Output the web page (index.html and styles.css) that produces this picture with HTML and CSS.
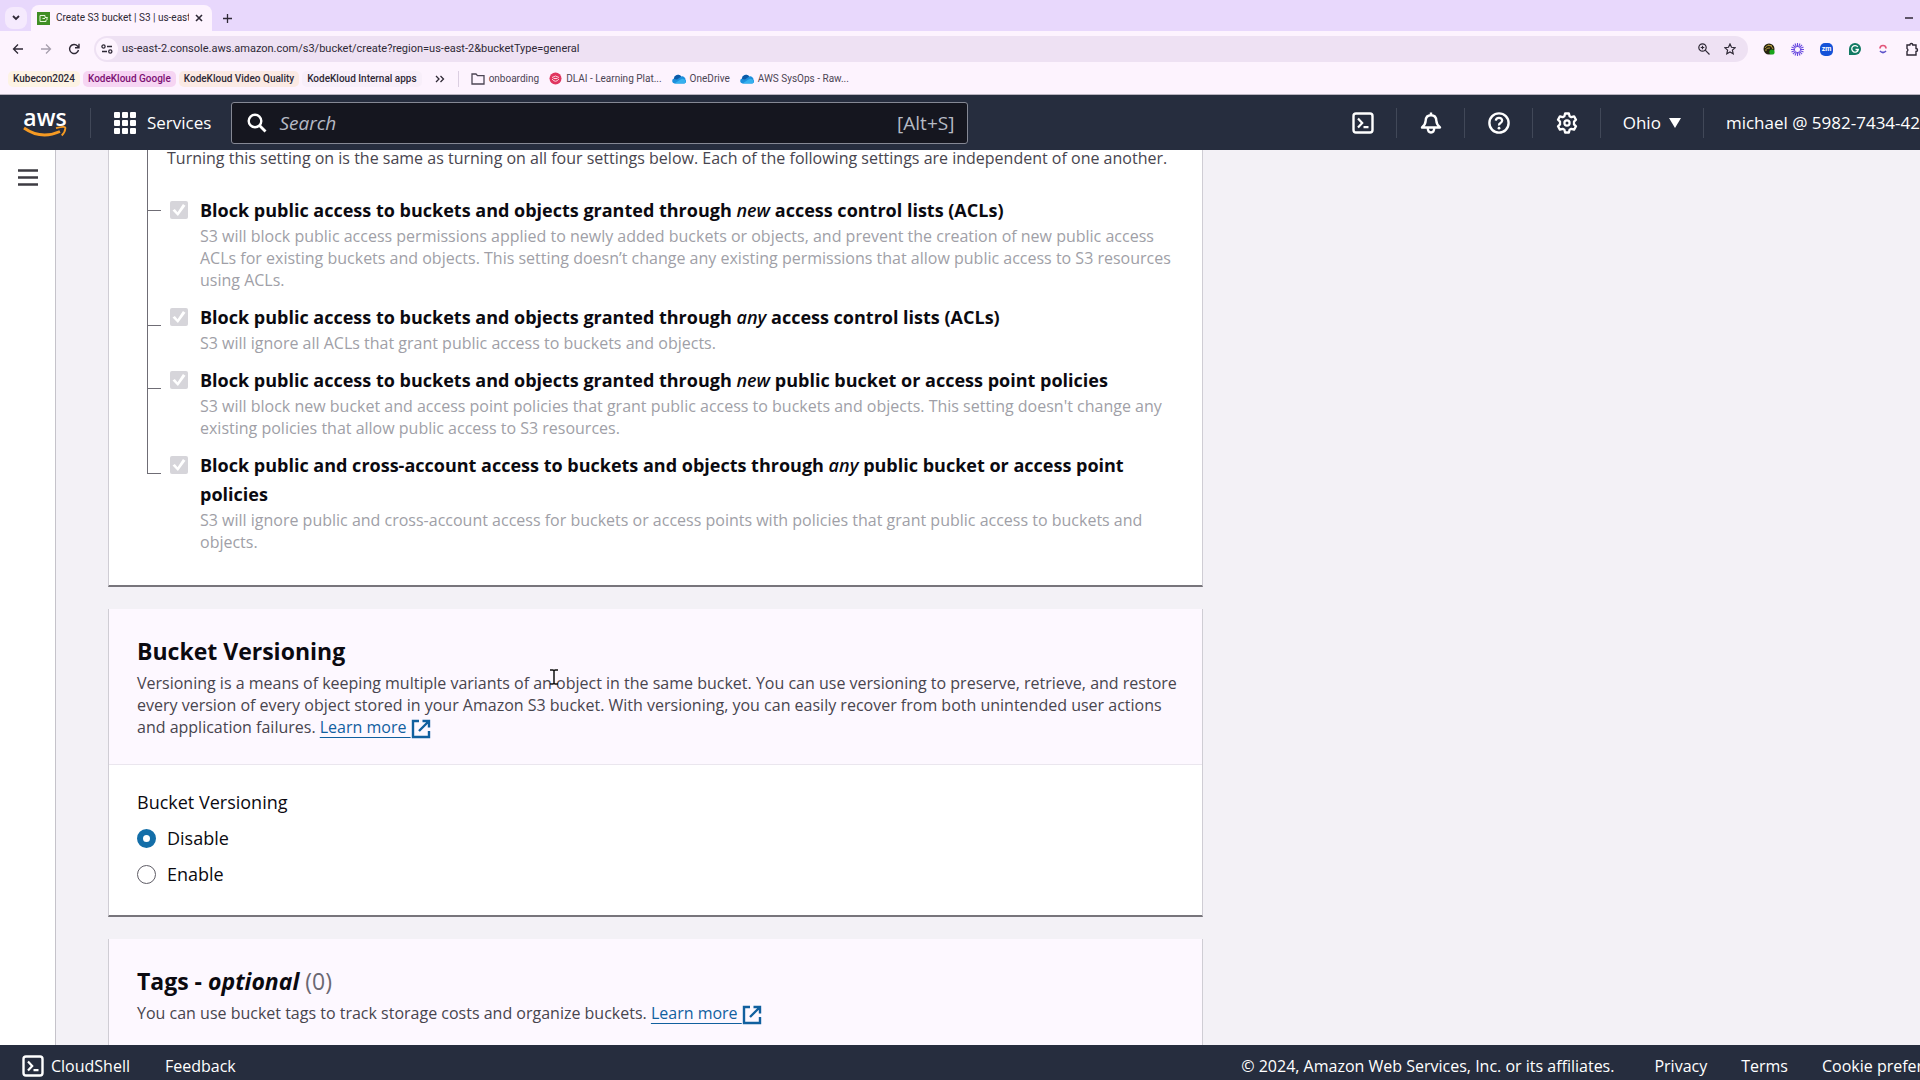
FILE: index.html
```html
<!DOCTYPE html>
<html lang="en">
<head>
<meta charset="utf-8">
<title>Create S3 bucket | S3 | us-east-2</title>
<link rel="stylesheet" href="styles.css">
</head>
<body>
<svg class="defs" aria-hidden="true">
  <symbol id="terminal" viewBox="0 0 22 22"><rect x="1.5" y="1.5" width="19" height="19" rx="2.5" fill="none" stroke="currentColor" stroke-width="2.4"/><path d="M6 6.5l4.2 4.5L6 15.500M11.500 15.200h5" fill="none" stroke="currentColor" stroke-width="2.200"/></symbol>
  <symbol id="external" viewBox="0 0 20 20"><path d="M8 2H2v16h16v-6M11.500 2H18v6.500M18 2L8 12" fill="none" stroke="currentColor" stroke-width="2.400"/></symbol>
  <symbol id="cloud" viewBox="0 0 14 10"><path d="M2.500 9.500A2.500 2.500 0 0 1 2 4.600 4 4 0 0 1 9.300 2.500 3.300 3.300 0 0 1 13.500 6 2 2 0 0 1 12 9.500z" fill="#1b8fdc"/><path d="M2 4.600A4 4 0 0 1 9.300 2.500L5 5.500 2 5z" fill="#0b5aa8"/><path d="M2.500 9.500L8.500 5.500Q11 3.500 13.500 6.500 14 9.500 12 9.500z" fill="#35b1ef"/></symbol>
</svg>

<header class="browser">
  <div class="tabs">
    <button class="tab-search" aria-label="Search tabs"><svg width="8" height="6" viewBox="0 0 8 6"><path d="M1 1l3 3 3-3" fill="none" stroke="currentColor" stroke-width="1.800"/></svg></button>
    <div class="tab">
      <svg width="13" height="13" viewBox="0 0 13 13"><rect width="13" height="13" fill="#3f8e24"/><path d="M3 3.500h5M3 3.500v6h6V8M8 3.500v2h2.500M5.500 6.500h2.500M10 5v3" fill="none" stroke="#e4f5d8"/></svg>
      <span class="tab-title">Create S3 bucket | S3 | us-east</span>
      <button class="plain" aria-label="Close tab"><svg width="8" height="8" viewBox="0 0 8 8"><path d="M1 1l6 6M7 1L1 7" stroke="currentColor" stroke-width="1.600"/></svg></button>
    </div>
    <button class="plain new-tab" aria-label="New tab"><svg width="9" height="9" viewBox="0 0 9 9"><path d="M4.500 0v9M0 4.500h9" stroke="currentColor" stroke-width="1.300"/></svg></button>
    <button class="plain minimize" aria-label="Minimize"><svg width="8" height="2" viewBox="0 0 8 2"><path d="M0 1h8" stroke="currentColor" stroke-width="1.500"/></svg></button>
  </div>
  <div class="toolbar">
    <nav class="history">
      <button class="plain" aria-label="Back"><svg width="12" height="12" viewBox="0 0 12 12"><path d="M11 6H1.500M6 1.500L1.500 6 6 10.500" fill="none" stroke="currentColor" stroke-width="1.300"/></svg></button>
      <button class="plain faded" aria-label="Forward"><svg width="12" height="12" viewBox="0 0 12 12"><path d="M1 6h9.500M6 1.500L10.500 6 6 10.500" fill="none" stroke="currentColor" stroke-width="1.300"/></svg></button>
      <button class="plain" aria-label="Reload"><svg width="12" height="12" viewBox="0 0 12 12"><path d="M10.500 7A4.500 4.500 0 1 1 9.500 3L11 4.500M11 .8v4H7" fill="none" stroke="currentColor" stroke-width="1.400"/></svg></button>
    </nav>
    <div class="omnibox">
      <button class="site-info" aria-label="Site information"><svg width="12" height="10" viewBox="0 0 12 10"><g fill="none" stroke="currentColor" stroke-width="1.300"><circle cx="2.500" cy="2.500" r="1.600"/><path d="M6 2.500h5M1 7.500h5"/><circle cx="9.300" cy="7.500" r="1.600"/></g></svg></button>
      <input class="url" aria-label="Address" value="us-east-2.console.aws.amazon.com/s3/bucket/create?region=us-east-2&amp;bucketType=general">
      <button class="plain" aria-label="Zoom"><svg width="12" height="12" viewBox="0 0 12 12"><g fill="none" stroke="currentColor" stroke-width="1.200"><circle cx="4.500" cy="4.500" r="3.700"/><path d="M7.200 7.200l4.300 4.300M2.700 4.500h3.600M4.500 2.700v3.600"/></g></svg></button>
      <button class="plain" aria-label="Bookmark"><svg width="12" height="12" viewBox="0 0 12 12"><path d="M6 1l1.500 3.300 3.600.4-2.700 2.400.8 3.600L6 8.900l-3.200 1.800.8-3.600L.9 4.700l3.600-.4z" fill="none" stroke="currentColor" stroke-width="1.200"/></svg></button>
    </div>
    <div class="extensions">
      <svg width="12" height="12" viewBox="0 0 12 12"><circle cx="6" cy="6" r="5.500" fill="#262411"/><path d="M2 5q2-4 7-2M3 8q-1-3 4-3M5 2q4 0 5 4" fill="none" stroke="#b69a3c"/><circle cx="9" cy="9" r="2.600" fill="#19a51a"/></svg>
      <svg width="13" height="13" viewBox="-6.500 -6.500 13 13"><path d="M0-2.500v-4M0 2.500v4M-2.500 0h-4M2.500 0h4M1.800-1.800l2.800-2.800M-1.800 1.800l-2.800 2.800M1.800 1.800l2.800 2.800M-1.800-1.800l-2.800-2.800M1-2.300L2.500-6M-1-2.300L-2.500-6M1 2.300L2.500 6M-1 2.300L-2.500 6M2.300 1L6 2.500M2.300-1L6-2.500M-2.300 1L-6 2.500M-2.300-1L-6-2.500" stroke="#6a4be0" stroke-width="1.100"/></svg>
      <span class="zm">zm</span>
      <svg width="12" height="12" viewBox="0 0 12 12"><path d="M6 0a6 6 0 1 1 0 12H0V6a6 6 0 0 1 6-6z" fill="#117a63"/><path d="M8.800 4A3.300 3.300 0 1 0 9.300 6.500H6.500" fill="none" stroke="#fff" stroke-width="1.300"/></svg>
      <svg width="12" height="12" viewBox="0 0 12 12"><path d="M3 5.500q0-3 3-3t3 3" fill="none" stroke="#e2557a" stroke-width="1.700"/><path d="M3 8q3 3 6 0" fill="none" stroke="#5b51c9" stroke-width="1.700"/></svg>
      <svg width="14" height="14" viewBox="0 0 14 14"><path d="M2 3h2.800a1.500 1.500 0 0 1 3 0H11v3.500a1.500 1.500 0 0 1 0 3V13H2V9.500q1.800-1.500 0-3z" fill="none" stroke="currentColor" stroke-width="1.400"/></svg>
    </div>
  </div>
  <nav class="bookmarks">
    <button class="chip cream">Kubecon2024</button>
    <button class="chip pink">KodeKloud Google</button>
    <button class="chip peach">KodeKloud Video Quality</button>
    <button class="chip grey">KodeKloud Internal apps</button>
    <button class="plain more" aria-label="More groups"><svg width="10" height="8" viewBox="0 0 10 8"><path d="M1 1l3 3-3 3M5.500 1l3 3-3 3" fill="none" stroke="currentColor" stroke-width="1.300"/></svg></button>
    <a class="bookmark first" href="#"><svg width="14" height="12" viewBox="0 0 14 12"><path d="M1 1h4l1.500 1.700H13V11H1z" fill="none" stroke="currentColor" stroke-width="1.300"/></svg>onboarding</a>
    <a class="bookmark" href="#"><svg width="13" height="13" viewBox="0 0 13 13"><circle cx="6.500" cy="6.500" r="6" fill="#e0355f"/><path d="M3 5.500q3.500-3 7 0M3 7q3.500 4.500 7 0M4.500 6.500h4" fill="none" stroke="#fbd3de"/></svg>DLAI - Learning Plat...</a>
    <a class="bookmark" href="#"><svg width="14" height="10"><use href="#cloud"/></svg>OneDrive</a>
    <a class="bookmark" href="#"><svg width="14" height="10"><use href="#cloud"/></svg>AWS SysOps - Raw...</a>
  </nav>
</header>

<header class="console-nav">
  <a class="logo" href="#" aria-label="AWS home">
    <span class="logo-text">aws</span>
    <svg width="44" height="12" viewBox="0 0 44 12"><path d="M1 2Q18 14 37 5.500" fill="none" stroke="#f59a23" stroke-width="2.800"/><path d="M33 2.200Q43-.5 42.300 2.500 42 6.500 38.700 9.500" fill="none" stroke="#f59a23" stroke-width="1.900"/></svg>
  </a>
  <button class="services"><svg width="22" height="22" viewBox="0 0 22 22" fill="#fff"><rect width="6" height="6" rx="1"/><rect x="8" width="6" height="6" rx="1"/><rect x="16" width="6" height="6" rx="1"/><rect y="8" width="6" height="6" rx="1"/><rect x="8" y="8" width="6" height="6" rx="1"/><rect x="16" y="8" width="6" height="6" rx="1"/><rect y="16" width="6" height="6" rx="1"/><rect x="8" y="16" width="6" height="6" rx="1"/><rect x="16" y="16" width="6" height="6" rx="1"/></svg>Services</button>
  <label class="search">
    <svg width="20" height="20" viewBox="0 0 20 20"><circle cx="8" cy="8" r="6.300" fill="none" stroke="#fff" stroke-width="2.400"/><path d="M12.500 12.500l6 6" stroke="#fff" stroke-width="2.800"/></svg>
    <input type="search" placeholder="Search" aria-label="Search">
    <span>[Alt+S]</span>
  </label>
  <div class="tools">
    <button class="tool" aria-label="CloudShell"><svg width="22" height="22"><use href="#terminal"/></svg></button>
    <button class="tool" aria-label="Notifications"><svg width="22" height="22" viewBox="0 0 22 22"><g fill="none" stroke="currentColor" stroke-width="2.400"><path d="M11 .5v3M2 15.500q3.500-3 3.700-7Q6 3.200 11 3.200t5.300 5.300q.2 4 3.700 7zM7.800 16q0 4.500 3.200 4.500t3.200-4.500" stroke-linejoin="round"/></g></svg></button>
    <button class="tool" aria-label="Help"><svg width="22" height="22" viewBox="0 0 22 22"><circle cx="11" cy="11" r="9.600" fill="none" stroke="currentColor" stroke-width="2.400"/><path d="M7.800 8.700Q8 5.800 11 5.800t3.200 2.800Q14.200 10 12.500 11T11 13.500" fill="none" stroke="currentColor" stroke-width="2.200"/><circle cx="11" cy="16.200" r="1.400" fill="currentColor"/></svg></button>
    <button class="tool" aria-label="Settings"><svg width="22" height="22" viewBox="0 0 22 22"><path d="M9.100 1.500h3.800l.7 2.700 1.800 1 2.700-.8 1.900 3.300-2 1.900v2.800l2 1.900-1.900 3.300-2.700-.8-1.800 1-.7 2.700H9.100l-.7-2.700-1.800-1-2.700.8L2 14.300l2-1.900V9.600L2 7.700l1.900-3.300 2.700.8 1.800-1z" fill="none" stroke="currentColor" stroke-width="2.300" stroke-linejoin="round"/><circle cx="11" cy="11" r="2.600" fill="none" stroke="currentColor" stroke-width="2.200"/></svg></button>
    <button class="region">Ohio<svg width="12" height="10" viewBox="0 0 12 10"><path d="M0 0h12L6 10z" fill="#fff"/></svg></button>
    <button class="account">michael @ 5982-7434-42</button>
  </div>
</header>

<div class="workspace">
  <aside class="side"><button class="plain" aria-label="Open navigation"><svg width="20" height="17" viewBox="0 0 20 17"><path d="M0 1.500h20M0 8.500h20M0 15.500h20" stroke="#3d3b42" stroke-width="2.600"/></svg></button></aside>
  <main class="content">
    <section class="card access">
      <div class="branch intro"><span class="rail"></span><p class="desc dark">Turning this setting on is the same as turning on all four settings below. Each of the following settings are independent of one another.</p></div>
      <div class="branch">
        <span class="rail"></span><input type="checkbox" id="acl-new" checked disabled>
        <div><label for="acl-new">Block public access to buckets and objects granted through <em>new</em> access control lists (ACLs)</label>
        <p class="desc">S3 will block public access permissions applied to newly added buckets or objects, and prevent the creation of new public access ACLs for existing buckets and objects. This setting doesn’t change any existing permissions that allow public access to S3 resources using ACLs.</p></div>
      </div>
      <div class="branch">
        <span class="rail"></span><input type="checkbox" id="acl-any" checked disabled>
        <div><label for="acl-any">Block public access to buckets and objects granted through <em>any</em> access control lists (ACLs)</label>
        <p class="desc">S3 will ignore all ACLs that grant public access to buckets and objects.</p></div>
      </div>
      <div class="branch">
        <span class="rail"></span><input type="checkbox" id="policy-new" checked disabled>
        <div><label for="policy-new">Block public access to buckets and objects granted through <em>new</em> public bucket or access point policies</label>
        <p class="desc">S3 will block new bucket and access point policies that grant public access to buckets and objects. This setting doesn't change any existing policies that allow public access to S3 resources.</p></div>
      </div>
      <div class="branch last">
        <span class="rail"></span><input type="checkbox" id="policy-any" checked disabled>
        <div><label for="policy-any">Block public and cross-account access to buckets and objects through <em>any</em> public bucket or access point policies</label>
        <p class="desc">S3 will ignore public and cross-account access for buckets or access points with policies that grant public access to buckets and objects.</p></div>
      </div>
    </section>

    <section class="card">
      <div class="card-head">
        <h2>Bucket Versioning</h2>
        <p class="desc dark">Versioning is a means of keeping multiple variants of an object in the same bucket. You can use versioning to preserve, retrieve, and restore every version of every object stored in your Amazon S3 bucket. With versioning, you can easily recover from both unintended user actions and application failures. <a class="learn" href="#">Learn more <svg width="20" height="20"><use href="#external"/></svg></a></p>
      </div>
      <fieldset class="options">
        <legend>Bucket Versioning</legend>
        <label><input type="radio" name="versioning" checked>Disable</label>
        <label><input type="radio" name="versioning">Enable</label>
      </fieldset>
    </section>

    <section class="card">
      <div class="card-head">
        <h2>Tags - <em>optional</em> <span class="count">(0)</span></h2>
        <p class="desc dark">You can use bucket tags to track storage costs and organize buckets. <a class="learn" href="#">Learn more <svg width="20" height="20"><use href="#external"/></svg></a></p>
      </div>
    </section>
  </main>
</div>

<footer class="footer">
  <button class="shell"><svg width="22" height="22"><use href="#terminal"/></svg>CloudShell</button>
  <a href="#">Feedback</a>
  <span class="copyright">© 2024, Amazon Web Services, Inc. or its affiliates.</span>
  <a href="#">Privacy</a>
  <a href="#">Terms</a>
  <a class="cookies" href="#">Cookie preferences</a>
</footer>
<svg class="cursor" width="10" height="16" viewBox="0 0 10 16" aria-hidden="true"><path d="M1 1h3l1 1 1-1h3M1 15h3l1-1 1 1h3M5 2v12" fill="none" stroke="#111" stroke-width="1.500"/></svg>
</body>
</html>
```
FILE: styles.css
```css
* { box-sizing: border-box; }

body {
  margin: 0;
  height: 100vh;
  display: flex;
  flex-direction: column;
  overflow: hidden;
  background: #f3f1f6;
  color: #0b0a10;
  font: 16px/22px "Open Sans", "Noto Sans", sans-serif;
}

button, input { font: inherit; color: inherit; }
button { border: 0; background: none; padding: 0; white-space: nowrap; }
a { color: inherit; text-decoration: none; white-space: nowrap; }
svg { flex: none; display: block; }
h2, p, fieldset, legend { margin: 0; padding: 0; border: 0; }
.defs { position: absolute; width: 0; height: 0; }
.plain { display: flex; flex: none; }

/* Browser chrome */
.browser {
  flex: none;
  background: #fdf3fe;
  border-bottom: 1px solid #b9b3bf;
  color: #2f2936;
  font: 11px/16px Roboto, "Noto Sans", sans-serif;
}
.tabs {
  display: flex;
  align-items: center;
  height: 31px;
  padding: 5px 7px 0 5px;
  background: #e8d8fc;
}
.tab-search {
  display: grid;
  place-items: center;
  width: 22px;
  height: 22px;
  margin-right: 4px;
  border-radius: 8px;
  background: #f5eafd;
}
.tab {
  display: flex;
  align-items: center;
  gap: 6px;
  width: 181px;
  height: 26px;
  padding: 0 9px 0 6px;
  border-radius: 8px 8px 0 0;
  background: #fdf3fe;
}
.tab-title {
  flex: 1;
  overflow: hidden;
  white-space: nowrap;
  font-size: 10px;
}
.new-tab { margin-left: 11px; }
.minimize { margin-left: auto; }

.toolbar {
  display: flex;
  align-items: center;
  height: 36px;
}
.history { display: flex; gap: 16px; padding: 0 14px 0 12px; }
.faded { color: #a79fae; }
.omnibox {
  flex: 1;
  display: flex;
  align-items: center;
  gap: 14px;
  height: 26px;
  padding: 0 12px 0 2px;
  border-radius: 13px;
  background: #eee1f3;
}
.site-info {
  display: grid;
  place-items: center;
  width: 22px;
  height: 22px;
  margin-right: -10px;
  border-radius: 50%;
  background: #fdf3fe;
}
.url {
  flex: 1;
  min-width: 0;
  padding: 0;
  border: 0;
  background: none;
  outline: 0;
}
.extensions {
  display: flex;
  align-items: center;
  gap: 16px;
  padding: 0 1px 0 15px;
}
.zm {
  width: 13px;
  border-radius: 5px;
  background: #1552d8;
  color: #fff;
  font-size: 7px;
  font-weight: 700;
  line-height: 13px;
  text-align: center;
}

.bookmarks {
  display: flex;
  align-items: center;
  height: 27px;
  padding: 0 0 4px 8px;
  font-size: 10px;
}
.chip {
  height: 16px;
  margin-right: 3px;
  padding: 0 5px;
  border-radius: 5px;
  font-weight: 500;
}
.cream { background: #fdf3e4; }
.pink { background: #f6d5f3; color: #7d1173; }
.peach { background: #fbeae4; }
.grey { background: #f8effa; }
.more { margin: 0 13px 0 10px; }
.bookmark {
  display: flex;
  align-items: center;
  gap: 4px;
  margin-right: 10px;
  color: #4c4554;
}
.first { padding-left: 12px; border-left: 1px solid #dccfe2; }

/* Console navigation */
.console-nav {
  flex: none;
  display: flex;
  align-items: center;
  height: 55px;
  background: #262d3e;
  color: #fff;
  font-size: 17px;
  overflow: hidden;
}
.logo {
  flex: none;
  display: flex;
  flex-direction: column;
  align-items: center;
  width: 91px;
  height: 30px;
  border-right: 1px solid #414858;
}
.logo-text { font-size: 23px; font-weight: 600; line-height: 18px; }
.services {
  display: flex;
  align-items: center;
  gap: 11px;
  margin: 0 20px 0 23px;
}
.search {
  flex: 1;
  display: flex;
  align-items: center;
  gap: 12px;
  max-width: 737px;
  height: 42px;
  padding: 0 13px 0 15px;
  border: 1px solid #858894;
  border-radius: 3px;
  background: #15161f;
  color: #b6bac4;
  font-size: 19px;
}
.search input {
  flex: 1;
  min-width: 0;
  padding: 0;
  border: 0;
  background: none;
  outline: 0;
}
.search input::placeholder { color: #b6bac4; font-style: italic; opacity: 1; }
.tools { display: flex; align-items: center; margin-left: auto; }
.tool, .region {
  display: flex;
  align-items: center;
  height: 30px;
  padding: 0 22px;
  border-right: 1px solid #414858;
}
.tool { padding-left: 23px; }
.region { gap: 8px; }
.account { padding-left: 22px; }

/* Page */
.workspace { flex: 1; display: flex; min-height: 0; }
.side {
  flex: none;
  width: 56px;
  padding: 19px 18px;
  border-right: 1px solid #c5c3ca;
  background: #fff;
}
.content {
  flex: 1;
  display: flex;
  flex-direction: column;
  gap: 22px;
  padding: 0 52px;
  overflow: hidden;
}
.card {
  flex: none;
  max-width: 1095px;
  background: #fff;
  border: 1px solid #cfcdd4;
  border-top: 0;
  border-bottom: 2px solid #77757b;
}
.access { margin-top: -3px; padding: 0 25px 32px 38px; }
.branch { display: flex; align-items: flex-start; }
.rail {
  flex: none;
  align-self: stretch;
  width: 23px;
  border-left: 1px solid #6f6d75;
}
.rail::before {
  content: "";
  display: block;
  width: 13px;
  height: 22px;
  border-bottom: 1px solid #6f6d75;
}
.intro .rail { width: 20px; }
.intro .rail::before { display: none; }
.intro .desc { padding-bottom: 27px; }
.intro + .branch .rail::before { height: 14px; }
.last .rail { align-self: flex-start; }
.branch > div { padding-bottom: 12px; }
.last > div { padding-bottom: 0; }
.branch label {
  display: block;
  font-size: 18px;
  font-weight: 700;
  line-height: 29px;
}
.branch em { font-weight: 600; }
.branch input {
  appearance: none;
  flex: none;
  width: 18px;
  height: 18px;
  margin: 5px 12px 0 0;
  border-radius: 2px;
  background: #d6d5da;
}
.branch input::before {
  content: "";
  display: block;
  height: 18px;
  background: #fff;
  clip-path: polygon(14% 53%, 27% 44%, 42% 62%, 72% 16%, 86% 26%, 44% 84%);
}
.desc { color: #a09fa7; }
.dark { color: #48454e; }

.card-head { padding: 27px 20px 26px 28px; background: #fdf8ff; }
h2 { margin-bottom: 6px; font-size: 23px; font-weight: 700; line-height: 30px; }
.count { color: #6b6872; font-weight: 400; }
.learn {
  color: #11609f;
  text-decoration: underline;
  text-underline-offset: 4px;
}
.learn svg { display: inline-block; margin: -4px 0; vertical-align: middle; }
.options {
  display: flex;
  flex-direction: column;
  gap: 12px;
  padding: 25px 28px 29px;
  border-top: 1px solid #eae6ee;
  font-size: 18px;
  line-height: 24px;
}
.options legend { float: left; }
.options label { display: flex; align-items: center; gap: 11px; }
.options input {
  appearance: none;
  width: 19px;
  height: 19px;
  margin: 0;
  border: 1px solid #5f5d66;
  border-radius: 50%;
  background: #fff;
}
.options input:checked { border: 6px solid #136ea8; }

.footer {
  flex: none;
  display: flex;
  align-items: flex-start;
  height: 35px;
  padding: 10px 0 0 22px;
  overflow: hidden;
  background: #262d3e;
  color: #fff;
}
.shell { display: flex; gap: 7px; margin-right: 35px; }
.copyright { margin: 0 40px 0 auto; white-space: nowrap; }
.footer .copyright ~ a { margin-right: 34px; }
.footer .copyright ~ .cookies { width: 98px; margin-right: 0; overflow: hidden; }

.cursor { position: absolute; left: 549px; top: 669px; }
```
